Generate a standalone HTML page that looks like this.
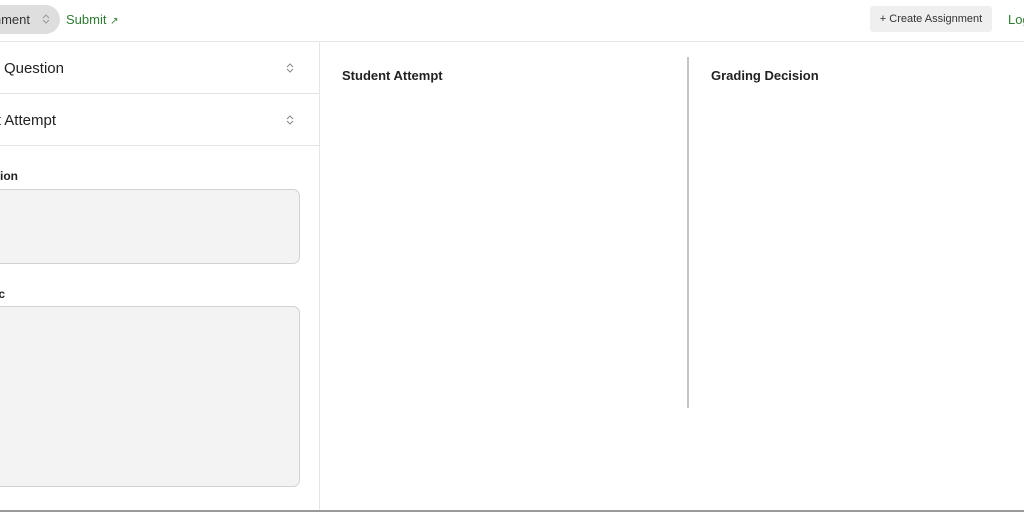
<!DOCTYPE html>
<html><head><style>
*{margin:0;padding:0;box-sizing:border-box}
body{width:1024px;height:512px;overflow:hidden;background:#fff;font-family:"Liberation Sans",Arial,sans-serif;color:#222;position:relative}
.a{position:absolute;white-space:nowrap}
.r{text-align:right}
</style></head><body>
<div class="a" style="left:-80px;top:5px;width:140px;height:29px;background:#dedede;border-radius:15px"></div>
<div class="a r" style="right:994px;top:12px;font-size:13px;color:#333">Assignment</div>
<svg class="a" style="left:41px;top:13px" width="10" height="12" viewBox="0 0 10 12"><path d="M2 5 L5 2 L8 5 M2 7 L5 10 L8 7" fill="none" stroke="#999" stroke-width="1"/></svg>
<div class="a" style="left:66px;top:12px;font-size:13px;color:#2e7d32">Submit <span style="font-size:10px">↗</span></div>
<div class="a" style="left:870px;top:6px;width:122px;height:26px;background:#efefef;border-radius:3px;font-size:11px;color:#333;text-align:center;line-height:27px">+ Create Assignment</div>
<div class="a" style="left:1008px;top:12px;font-size:13px;color:#2e7d32">Logout</div>
<div class="a" style="left:0;top:41px;width:1024px;height:1px;background:#e6e6e6"></div>
<div class="a" style="left:319px;top:42px;width:1px;height:470px;background:#e6e6e6"></div>
<div class="a" style="left:0;top:93px;width:319px;height:1px;background:#e3e3e3"></div>
<div class="a" style="left:0;top:145px;width:319px;height:1px;background:#e3e3e3"></div>
<div class="a r" style="right:960px;top:60px;font-size:15px;color:#222">Test Question</div>
<div class="a r" style="right:968px;top:112px;font-size:15px;color:#222">Student Attempt</div>
<svg class="a" style="left:285px;top:61px" width="10" height="14" viewBox="0 0 10 14"><path d="M2 6 L5 3 L8 6 M2 8 L5 11 L8 8" fill="none" stroke="#888" stroke-width="1"/></svg>
<svg class="a" style="left:285px;top:113px" width="10" height="14" viewBox="0 0 10 14"><path d="M2 6 L5 3 L8 6 M2 8 L5 11 L8 8" fill="none" stroke="#888" stroke-width="1"/></svg>
<div class="a r" style="right:1006px;top:169px;font-size:12px;font-weight:bold">Question</div>
<div class="a" style="left:-20px;top:189px;width:320px;height:75px;background:#f3f3f3;border:1px solid #d2d2d2;border-radius:7px"></div>
<div class="a r" style="right:1019px;top:287px;font-size:12px;font-weight:bold">Rubric</div>
<div class="a" style="left:-20px;top:306px;width:320px;height:181px;background:#f3f3f3;border:1px solid #d2d2d2;border-radius:7px"></div>
<div class="a" style="left:0;top:510px;width:1024px;height:2px;background:#9a9a9a"></div>
<div class="a" style="left:342px;top:68px;font-size:13px;font-weight:bold;color:#222">Student Attempt</div>
<div class="a" style="left:711px;top:68px;font-size:13px;font-weight:bold;color:#222">Grading Decision</div>
<div class="a" style="left:687px;top:57px;width:2px;height:351px;background:#c4c4c4"></div>
</body></html>
